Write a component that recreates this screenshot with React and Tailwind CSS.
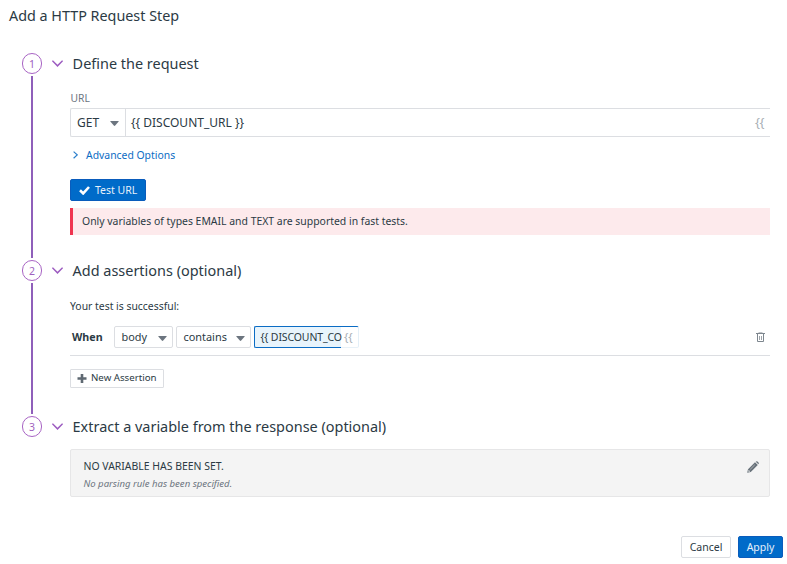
import React from 'react';

function Caret() {
  return (
    <svg className="mt-[2px] shrink-0" width="9" height="5" viewBox="0 0 9 5">
      <path d="M0.8 0h7.4q.9 0 .3.8L5.2 4.6q-.7.6-1.4 0L.5.8Q-.1 0 .8 0z" fill="#6c757f" />
    </svg>
  );
}

function Step({ number, title, last, height, children }) {
  return (
    <section className={`flex pl-[22px] ${height}`}>
      <div className="flex w-5 shrink-0 flex-col items-center">
        <div className="flex h-[21px] w-5 shrink-0 items-center justify-center rounded-full border border-[#a864c4] pt-px text-[10.5px] leading-none text-[#a05fc0]">
          {number}
        </div>
        {!last && <div className="mt-[2px] mb-[2px] w-[2px] flex-1 bg-[#8f5fba]" />}
      </div>
      <div className="min-w-0 flex-1">
        <div className="flex h-[21px] items-center pl-[10px]">
          <svg width="11" height="7" viewBox="0 0 11 7" fill="none">
            <path d="M0.4 0.7L5.5 5.9L10.6 0.7" stroke="#9c5bc0" strokeWidth="1.5" />
          </svg>
          <h2 className="pl-[9.6px] text-[14.45px] leading-[21px]">{title}</h2>
        </div>
        <div className="w-[728px] pl-7">{children}</div>
      </div>
    </section>
  );
}

function Select({ width, children }) {
  return (
    <div className={`flex h-[22px] items-center justify-between rounded-[2px] border border-[#dcdee2] pr-[5px] pl-[6.5px] text-[10.9px] ${width}`}>
      <span>{children}</span>
      <Caret />
    </div>
  );
}

export default function App() {
  return (
    <main className="flex h-[564px] w-[787px] flex-col overflow-hidden bg-white font-['Noto_Sans',sans-serif] whitespace-nowrap text-[#2b3a44]">
      <header className="h-[53px] shrink-0 pt-[6px] pl-[9px]">
        <h1 className="text-[14.35px] leading-5">Add a HTTP Request Step</h1>
      </header>

      <Step number="1" title="Define the request" height="h-[207px]">
        <div className="pt-[17px] pl-[0.5px] text-[10.3px] leading-[15px] text-[#6c757f]">URL</div>
        <div className="mt-[2px] flex h-[29px] rounded-l-[2px] border border-r-0 border-[#dcdee2] text-[12px]">
          <div className="flex w-[55px] items-center justify-between border-r border-[#dcdee2] pr-[6px] pl-[6px]">
            <span>GET</span>
            <Caret />
          </div>
          <div className="flex flex-1 items-center justify-between pr-[6px] pl-[5px]">
            <span>{'{{ DISCOUNT_URL }}'}</span>
            <span className="text-[13px] tracking-[-0.5px] text-[#a9b0b6]">{'{{'}</span>
          </div>
        </div>
        <div className="mt-[11px] flex h-4 items-center text-[10.4px] text-[#0b6cc4]">
          <svg className="-mt-[2px] ml-[3px]" width="5" height="8" viewBox="0 0 5 8" fill="none">
            <path d="M0.6 0.6L4.2 3.9L0.6 7.2" stroke="#2b7fcc" strokeWidth="1.2" />
          </svg>
          <span className="pl-2">Advanced Options</span>
        </div>
        <button className="mt-[15px] flex h-[22px] w-[76px] items-center rounded-[2px] border border-[#0a5cbc] bg-[#006bc9] pl-2 text-[10.5px] text-[#e6f1fb]">
          <svg width="11" height="9" viewBox="0 0 11 9" fill="none">
            <path d="M1 4.3L4.2 7.4L10 1" stroke="#fff" strokeWidth="2.6" />
          </svg>
          <span className="pt-px pl-[5px]">Test URL</span>
        </button>
        <div className="mt-[7px] flex h-[27px] items-center border-l-[3px] border-[#ef3550] bg-[#fdeaec] pl-[9px] text-[10.43px]">
          Only variables of types EMAIL and TEXT are supported in fast tests.
        </div>
      </Step>

      <Step number="2" title="Add assertions (optional)" height="h-[156px]">
        <div className="pt-[17px] text-[10.4px] leading-4">Your test is successful:</div>
        <div className="mt-3 flex h-[30px] items-start border-b border-[#dcdee2]">
          <div className="w-11 pl-[2px] text-[10.7px] leading-[22px] font-bold">When</div>
          <div className="flex gap-[3px]">
            <Select width="w-[59px]">body</Select>
            <Select width="w-[75px]">contains</Select>
            <div className="flex w-[105px]">
              <div className="h-[22px] w-[87px] rounded-l-[2px] border border-r-0 border-[#0b6cc4] bg-[#e8f4fc] pl-[5.5px] text-[10.5px] leading-[21px] tracking-[-0.12px]">
                {'{{ DISCOUNT_CO'}
              </div>
              <div className="h-[22px] w-[18px] rounded-r-[2px] border-t border-r border-b border-t-[#0b6cc4] border-r-[#e3eff8] border-b-[#e8f1f8] pl-[3px] text-[11.5px] leading-5 tracking-[-0.2px] text-[#a9b0b6]">
                {'{{'}
              </div>
            </div>
          </div>
          <svg className="mt-[6px] mr-[5px] ml-auto" width="9" height="11" viewBox="0 0 9 11" fill="none" stroke="#7d868e">
            <path d="M0 1.5H9" strokeWidth="1" />
            <path d="M2.5 .5H6.5" strokeWidth="1" opacity=".5" />
            <path d="M1.5 2V9.5H7.5V2" strokeWidth="1" />
            <path d="M3.5 4V8M5.5 4V8" strokeWidth="1" opacity=".75" />
          </svg>
        </div>
        <button className="mt-[13px] flex h-[19px] w-[94px] items-center rounded-[1px] border border-[#dcdee2] pl-[6px] text-[9.7px]">
          <svg width="10" height="9" viewBox="0 0 10 9">
            <path d="M5 0V9M.5 4.5H9.5" stroke="#5f6972" strokeWidth="2.6" />
          </svg>
          <span className="pl-[4px]">New Assertion</span>
        </button>
      </Step>

      <Step number="3" title="Extract a variable from the response (optional)" height="h-[81px]" last>
        <div className="mt-3 flex h-12 justify-between rounded-[2px] border border-[#e6e6e7] bg-[#f4f4f4] pr-[10px] pl-[12.5px]">
          <div className="pt-[8px]">
            <div className="text-[10.45px] leading-4">NO VARIABLE HAS BEEN SET.</div>
            <div className="mt-[2px] text-[9.55px] leading-4 text-[#6c757f] italic">No parsing rule has been specified.</div>
          </div>
          <svg className="mt-[11px]" width="12" height="12" viewBox="0 0 12 12">
            <path d="M.2 11.8L1 8.2L8 1.2L10.8 4L3.8 11ZM8.7.7Q9.6-.2 10.5.5L11.5 1.5Q12.2 2.4 11.4 3.3Z" fill="#69737b" />
            <path d="M1.6 8.8L3.2 10.4L1.4 10.7Z" fill="#f4f4f4" />
            <path d="M3.2 8.4L7.8 3.8" stroke="#c5c9cc" strokeWidth=".7" />
          </svg>
        </div>
      </Step>

      <footer className="mt-[39px] flex justify-end gap-[7px] pr-1">
        <button className="h-[22px] w-[50px] rounded-[2px] border border-[#dcdee2] text-[10.5px] leading-5">Cancel</button>
        <button className="h-[22px] w-[45px] rounded-[2px] border border-[#0a5cbc] bg-[#006bc9] text-[10.5px] leading-5 text-[#e6f1fb]">Apply</button>
      </footer>
    </main>
  );
}
